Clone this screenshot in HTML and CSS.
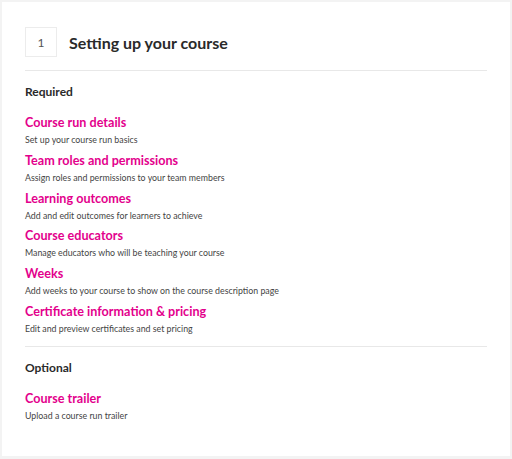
FILE: index.html
```html
<!DOCTYPE html>
<html>
<head>
<meta charset="utf-8">
<link rel="stylesheet" href="styles.css">
</head>
<body>
<div class="card">
  <div class="header">
    <div class="step">1</div>
    <h1 class="title">Setting up your course</h1>
  </div>
  <section class="group">
    <h2 class="group-title">Required</h2>
    <ul class="items">
      <li class="item"><a class="item-link">Course run details</a><p class="item-desc">Set up your course run basics</p></li>
      <li class="item"><a class="item-link">Team roles and permissions</a><p class="item-desc">Assign roles and permissions to your team members</p></li>
      <li class="item"><a class="item-link">Learning outcomes</a><p class="item-desc">Add and edit outcomes for learners to achieve</p></li>
      <li class="item"><a class="item-link">Course educators</a><p class="item-desc">Manage educators who will be teaching your course</p></li>
      <li class="item"><a class="item-link">Weeks</a><p class="item-desc">Add weeks to your course to show on the course description page</p></li>
      <li class="item"><a class="item-link">Certificate information &amp; pricing</a><p class="item-desc">Edit and preview certificates and set pricing</p></li>
    </ul>
  </section>
  <section class="group group-optional">
    <h2 class="group-title">Optional</h2>
    <ul class="items">
      <li class="item"><a class="item-link">Course trailer</a><p class="item-desc">Upload a course run trailer</p></li>
    </ul>
  </section>
</div>
</body>
</html>
```
FILE: styles.css
```css
html, body {
  margin: 0;
  padding: 0;
}
body {
  background: #f3f3f3;
  font-family: Lato, "Open Sans", sans-serif;
  color: #2a2a2a;
}
.card {
  margin: 2px;
  width: 508px;
  height: 454px;
  box-sizing: border-box;
  background: #fff;
  padding: 25px 23px 0 23px;
}
.header {
  display: flex;
  align-items: center;
  gap: 12px;
  padding-bottom: 13px;
  border-bottom: 1px solid #e8e8e8;
}
.step {
  width: 32px;
  height: 30px;
  box-sizing: border-box;
  border: 1px solid #ececec;
  display: flex;
  align-items: center;
  justify-content: center;
  font-size: 12px;
  color: #555;
}
.title {
  margin: 0;
  font-size: 16px;
  font-weight: 700;
  color: #2a2a2a;
}
.group {
  padding-top: 13px;
}
.group-optional {
  border-top: 1px solid #e8e8e8;
  margin-top: 10px;
}
.group-title {
  margin: 0 0 15px;
  font-size: 12px;
  font-weight: 700;
  color: #2a2a2a;
}
.items {
  list-style: none;
  margin: 0;
  padding: 0;
  display: flex;
  flex-direction: column;
  gap: 4.8px;
}
.item-link {
  display: block;
  font-size: 12.6px;
  font-weight: 700;
  color: #e3008c;
  line-height: 18px;
}
.item-desc {
  margin: 1px 0 0;
  font-size: 8.8px;
  line-height: 14px;
  color: #444;
}
```
